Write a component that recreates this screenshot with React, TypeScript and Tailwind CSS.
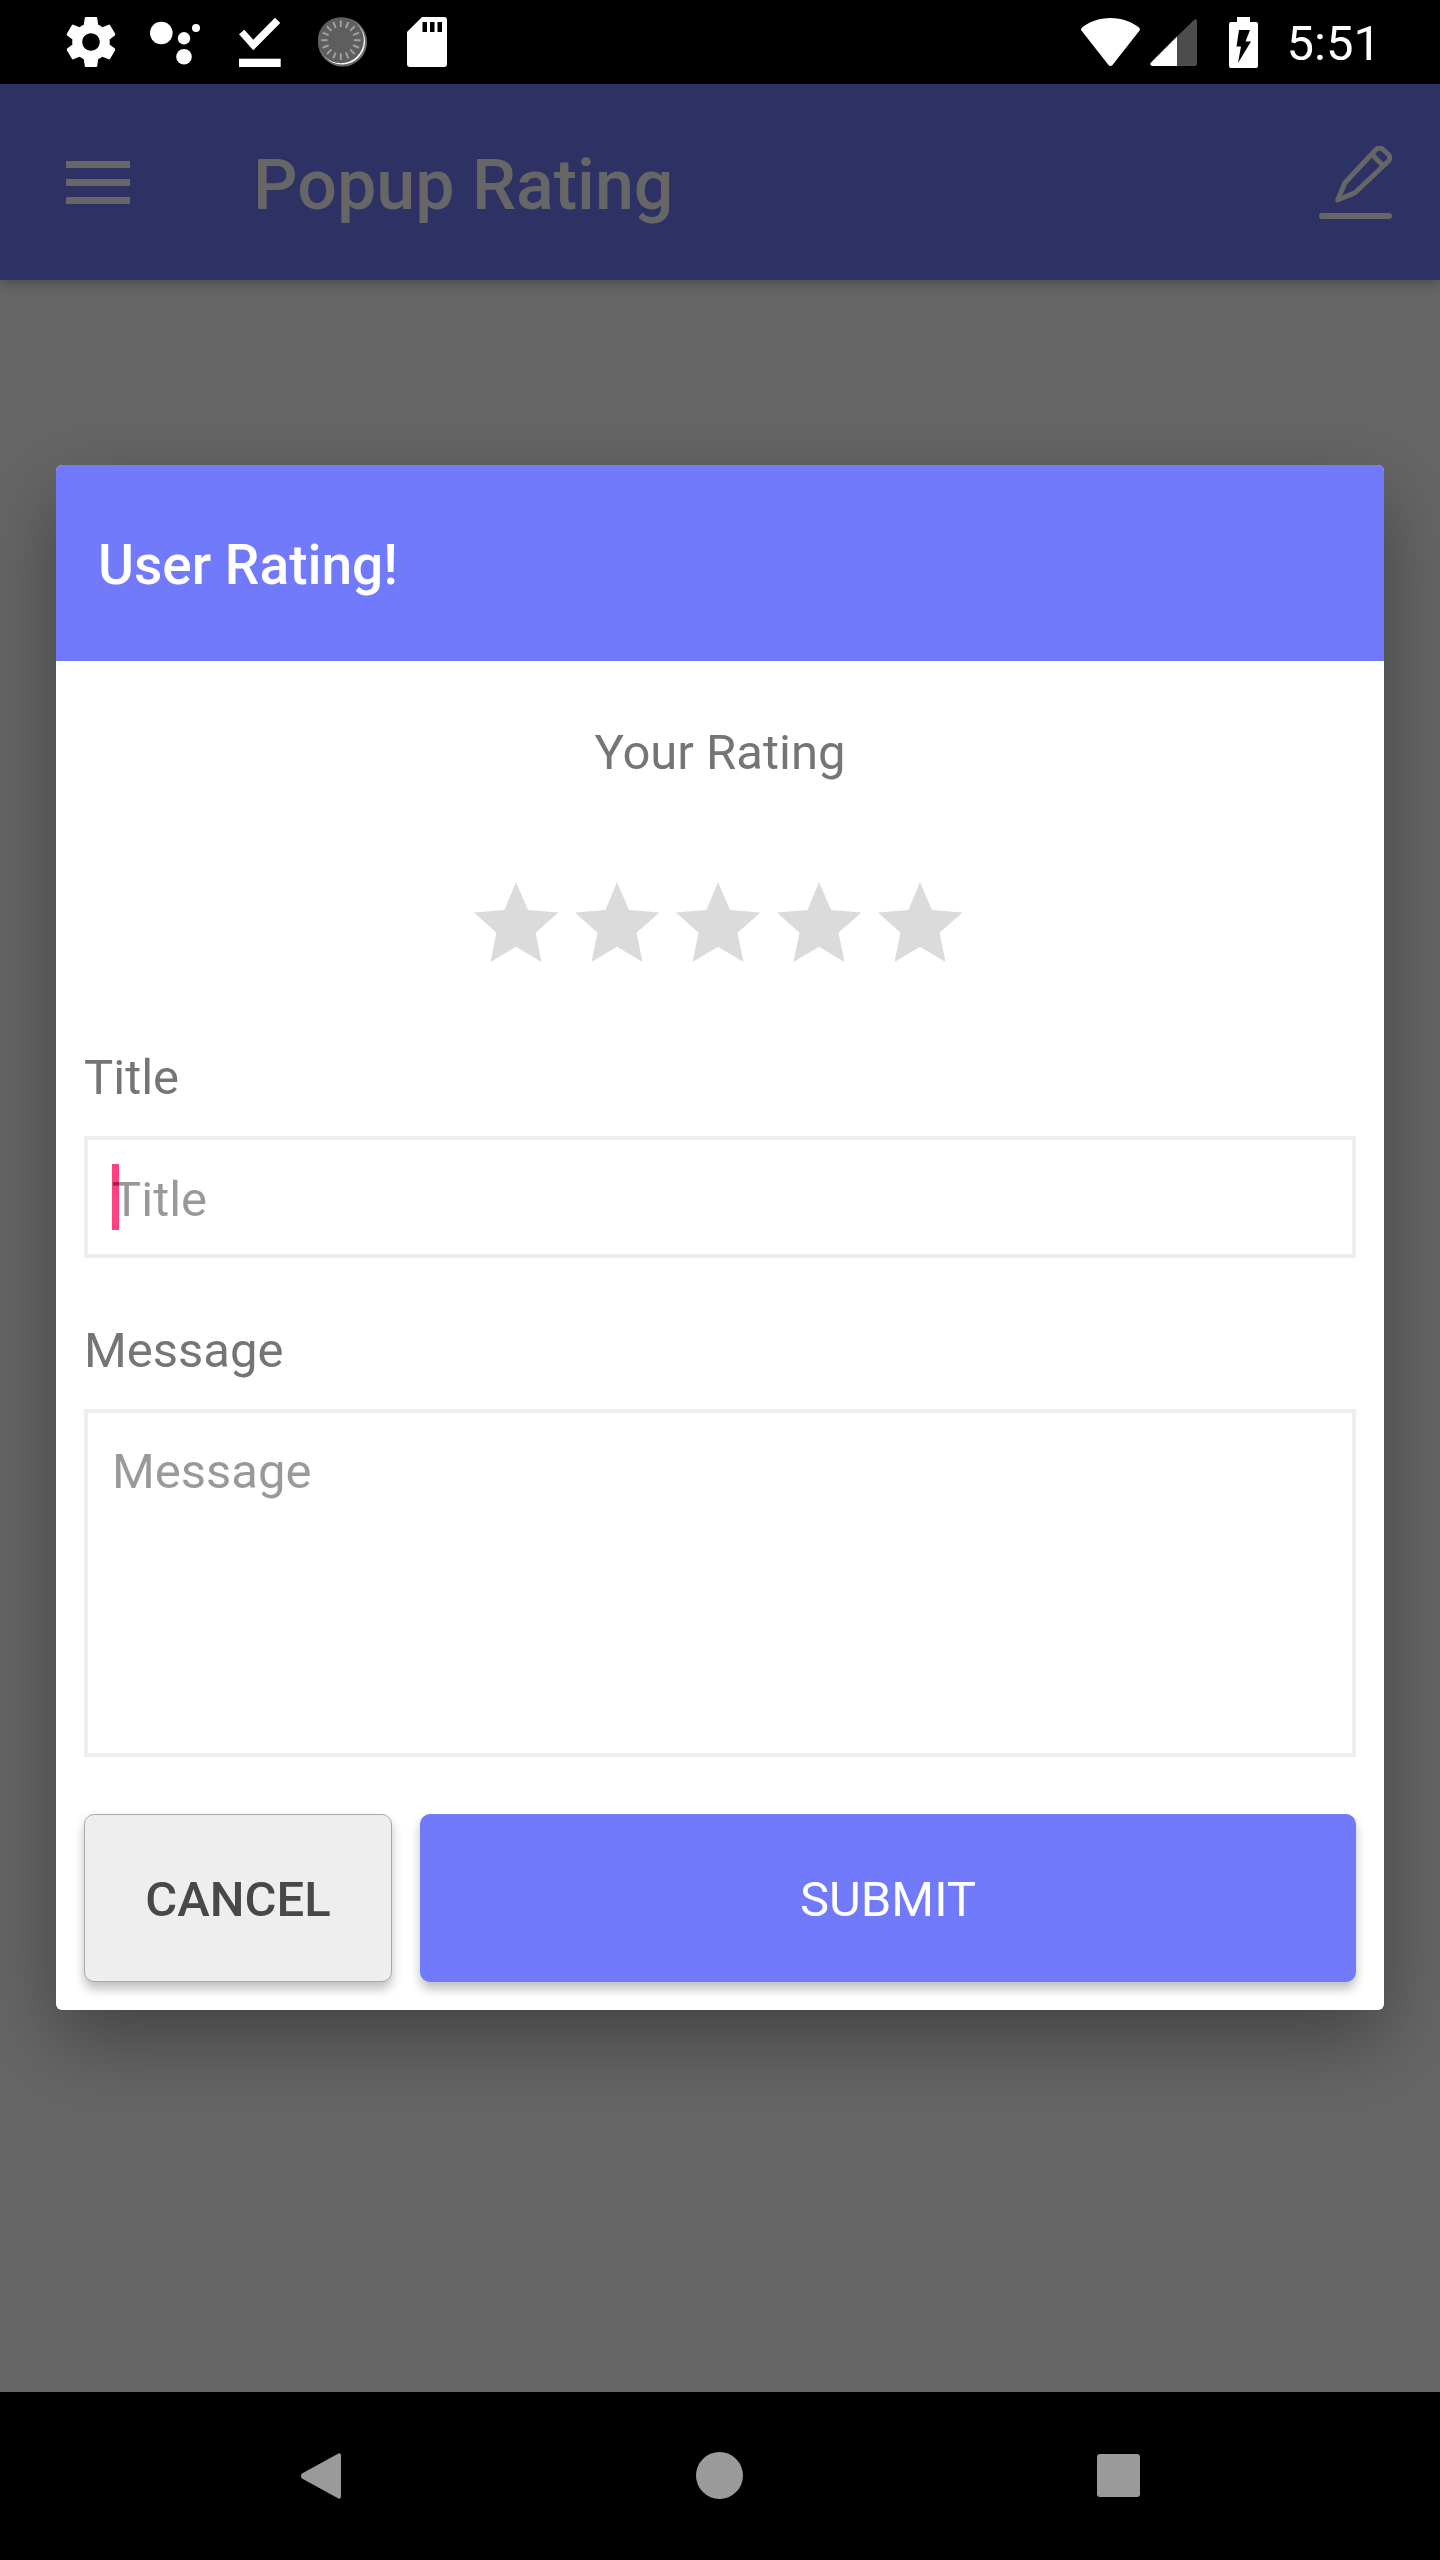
const font = { fontFamily: "Roboto, sans-serif" };

function Gear() {
  return (
    <svg viewBox="2 2 20 20" className="h-[50px] w-[50px] fill-white">
      <path d="M19.43 12.98c.04-.32.07-.64.07-.98s-.03-.66-.07-.98l2.11-1.65c.19-.15.24-.42.12-.64l-2-3.46c-.12-.22-.39-.3-.61-.22l-2.49 1c-.52-.4-1.08-.73-1.69-.98l-.38-2.65C14.46 2.18 14.25 2 14 2h-4c-.25 0-.46.18-.49.42l-.38 2.65c-.61.25-1.17.59-1.69.98l-2.49-1c-.23-.09-.49 0-.61.22l-2 3.46c-.13.22-.07.49.12.64l2.11 1.65c-.04.32-.07.65-.07.98s.03.66.07.98l-2.11 1.65c-.19.15-.24.42-.12.64l2 3.46c.12.22.39.3.61.22l2.49-1c.52.4 1.08.73 1.69.98l.38 2.65c.03.24.24.42.49.42h4c.25 0 .46-.18.49-.42l.38-2.65c.61-.25 1.17-.59 1.69-.98l2.49 1c.23.09.49 0 .61-.22l2-3.46c.12-.22.07-.49-.12-.64l-2.11-1.65zM12 15.5c-1.93 0-3.5-1.57-3.5-3.5s1.57-3.5 3.5-3.5 3.5 1.57 3.5 3.5-1.57 3.5-3.5 3.5z" />
    </svg>
  );
}

function AssistantDots() {
  return (
    <svg viewBox="0 0 50 50" className="h-[50px] w-[50px] fill-white">
      <circle cx="11.3" cy="16" r="11.3" />
      <circle cx="34" cy="21.3" r="6.2" />
      <circle cx="34" cy="39.7" r="7.8" />
      <circle cx="46" cy="11" r="4" />
    </svg>
  );
}

function CheckDone() {
  return (
    <svg viewBox="0 0 42 50" className="h-[50px] w-[42px] fill-white">
      <path d="M36 .7l5.3 5.3-27 27.3L0 17.3l5.3-4.6 9 10z" />
      <rect x="0" y="41.7" width="41.7" height="8.3" />
    </svg>
  );
}

function Spinner() {
  const ticks = Array.from({ length: 16 }, (_, i) => i * 22.5);
  return (
    <svg viewBox="0 0 49 50" className="h-[50px] w-[49px]">
      <circle cx="24.5" cy="25" r="24.5" fill="#6b6b6b" />
      <circle cx="24" cy="24.5" r="23" fill="#fff" />
      <circle cx="22.8" cy="23.2" r="23" fill="#5e5e5e" />
      {ticks.map((deg) => (
        <rect
          key={deg}
          x="21.8"
          y="3.5"
          width="2"
          height="6.5"
          fill="#a0a0a0"
          transform={`rotate(${deg} 22.8 23.2)`}
        />
      ))}
    </svg>
  );
}

function SdCard() {
  return (
    <svg viewBox="0 0 40 50" className="h-[50px] w-[40px]">
      <path d="M3 50a3 3 0 0 1-3-3V15L15 0h22a3 3 0 0 1 3 3v44a3 3 0 0 1-3 3z" fill="#fff" />
      <rect x="15.5" y="5" width="4.5" height="10" fill="#000" />
      <rect x="23" y="5" width="4.5" height="10" fill="#000" />
      <rect x="30.5" y="5" width="4.5" height="10" fill="#000" />
    </svg>
  );
}

function Wifi() {
  return (
    <svg viewBox="0 0 59 48" className="h-[48px] w-[59px] fill-white">
      <path d="M1 9.5C8 4 18 0 29.5 0S51 4 58 9.5c1 1 1.2 2 .6 3L31.5 47c-1 1.3-3 1.3-4 0L.4 12.5C-.2 11.5 0 10.5 1 9.5z" />
    </svg>
  );
}

function Signal() {
  return (
    <svg viewBox="0 0 47 47" className="h-[47px] w-[47px]">
      <path d="M27 47H2.5c-2 0-3-2-1.5-3.5l26-26z" fill="#fff" />
      <path d="M27 47h17.5c1.5 0 2.5-1 2.5-2.500V2.500c0-2.200-1.500-3-3-1.500L27 17.500z" fill="#4c4c4c" />
    </svg>
  );
}

function Battery() {
  return (
    <svg viewBox="0 0 29 51" className="h-[51px] w-[29px]">
      <path d="M8 0h13v5h6a2 2 0 0 1 2 2v42a2 2 0 0 1-2 2H2a2 2 0 0 1-2-2V7a2 2 0 0 1 2-2h6z" fill="#fff" />
      <path d="M10 13h11l-4.500 11.500H22L9 46l3-16.500H7.500z" fill="#000" />
    </svg>
  );
}

function Star() {
  return (
    <svg viewBox="0 0 85 80" className="h-[80px] w-[85px] fill-[#dbdbdb]">
      <path d="M42 0l12 28 30.500 2.500-23 20.200 6 29.300L42 64.700 16.500 80l6-29.300L0 30.500 30.500 28z" />
    </svg>
  );
}

function Hamburger() {
  return (
    <div className="flex w-[64px] flex-col gap-[11px]">
      <div className="h-[7px] bg-[#666666]" />
      <div className="h-[7px] bg-[#666666]" />
      <div className="h-[7px] bg-[#666666]" />
    </div>
  );
}

function Pen() {
  return (
    <svg viewBox="0 0 73 73" className="h-[73px] w-[73px] fill-none stroke-[#666666]" strokeWidth="5" strokeLinejoin="round">
      <path d="M18.700 54L26 36.700 57 3.500Q60.500 .5 64 3.500L69.500 8.500Q72 12 69.500 15L36 46.700z" />
      <path d="M52 7.500l13 13" />
      <rect x="0" y="67" width="73" height="6" rx="3" fill="#666666" stroke="none" />
    </svg>
  );
}

function Field({ label, children, box }: { label: string; children: React.ReactNode; box: string }) {
  return (
    <div>
      <div className="h-[57px] text-[49px] leading-[59px] text-[#757575]">{label}</div>
      <div className={`relative mt-[31px] border-[4px] border-[#eeeeee] pl-[24px] text-[49px] text-black/40 ${box}`}>
        {children}
      </div>
    </div>
  );
}

export default function App() {
  return (
    <div className="flex h-[2560px] w-[1440px] flex-col overflow-hidden bg-[#666666]" style={font}>
      {/* status bar */}
      <div className="flex h-[84px] shrink-0 items-center justify-between bg-black pl-[66px] pr-[59px]">
        <div className="flex items-center">
          <Gear />
          <div className="ml-[34px]">
            <AssistantDots />
          </div>
          <div className="ml-[39px]">
            <CheckDone />
          </div>
          <div className="ml-[37px]">
            <Spinner />
          </div>
          <div className="ml-[40px]">
            <SdCard />
          </div>
        </div>
        <div className="flex items-center">
          <Wifi />
          <div className="ml-[10px]">
            <Signal />
          </div>
          <div className="ml-[32px]">
            <Battery />
          </div>
          <span className="ml-[29px] pt-[3px] text-[49px] leading-none text-white">5:51</span>
        </div>
      </div>

      {/* app bar */}
      <div className="z-10 flex h-[196px] shrink-0 items-center justify-between bg-[#2e3164] pl-[66px] pr-[48px] shadow-[0_4px_12px_rgba(0,0,0,0.25)]">
        <div className="flex items-center">
          <Hamburger />
          <span className="ml-[123px] pt-[6px] text-[70px] font-medium leading-none text-[#666666]">Popup Rating</span>
        </div>
        <Pen />
      </div>

      {/* dimmed content */}
      <div className="flex-1 pl-[56px] pt-[185px]">
        <div className="h-[1545px] w-[1328px] overflow-hidden rounded-[6px] bg-white shadow-[0_30px_80px_rgba(0,0,0,0.35)]">
          <div className="flex h-[196px] items-center bg-[#717afa] pl-[42px] pt-[4px] text-[55px] font-medium text-white">
            User Rating!
          </div>
          <div className="px-[28px]">
            <div className="pt-[63px] text-center text-[49px] leading-[57px] text-[#757575]">Your Rating</div>
            <div className="ml-[390px] mt-[101px] flex gap-[16px]">
              <Star />
              <Star />
              <Star />
              <Star />
              <Star />
            </div>
            <div className="mt-[86px]">
              <Field label="Title" box="h-[122px] flex items-center pt-[5px]">
                <span className="relative z-10">Title</span>
                <div className="absolute left-[24px] top-[24px] h-[66px] w-[7px] bg-[#ff4081]" />
              </Field>
            </div>
            <div className="mt-[63px]">
              <Field label="Message" box="h-[348px] pt-[30px] leading-[57px]">
                Message
              </Field>
            </div>
            <div className="mt-[57px] flex gap-[28px]">
              <button className="h-[168px] w-[308px] rounded-[10px] border border-[#a8a8a8] bg-[#eeeeee] pt-[3px] text-[49px] font-medium text-[#484848] shadow-[0_7px_11px_rgba(0,0,0,0.25)]">
                CANCEL
              </button>
              <button className="h-[168px] w-[936px] rounded-[10px] bg-[#717afa] pt-[3px] text-[49px] text-white shadow-[0_7px_11px_rgba(0,0,0,0.25)]">
                SUBMIT
              </button>
            </div>
          </div>
        </div>
      </div>

      {/* nav bar */}
      <div className="flex h-[168px] shrink-0 items-start bg-black pl-[301px] pt-[61px]">
        <svg viewBox="0 0 40 46" className="h-[46px] w-[40px] fill-[#9a9a9a]">
          <path d="M36.500 1C38-.3 40 .5 40 2.500V43.500C40 45.500 38 46.300 36.500 45L1 25.500C-.3 24.500-.3 21.500 1 20.500z" />
        </svg>
        <div className="ml-[355px] -mt-[1px] h-[47px] w-[47px] rounded-full bg-[#9a9a9a]" />
        <div className="ml-[354px] mt-[1px] h-[43px] w-[43px] rounded-[3px] bg-[#9a9a9a]" />
      </div>
    </div>
  );
}
